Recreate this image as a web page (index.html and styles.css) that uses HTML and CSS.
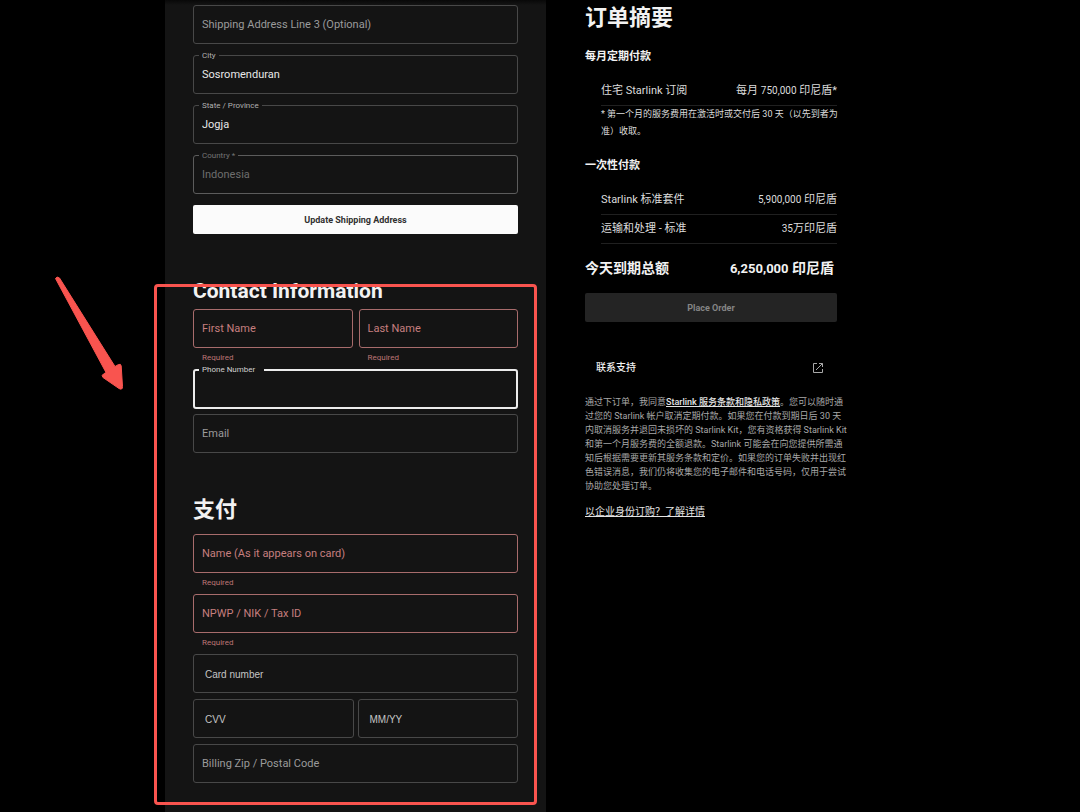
FILE: index.html
```html
<!DOCTYPE html>
<html lang="zh-CN">
<head>
<meta charset="utf-8">
<meta name="viewport" content="width=device-width, initial-scale=1">
<title>Starlink</title>
<link rel="stylesheet" href="styles.css">
</head>
<body>
<div class="page">
  <main class="panel">
    <form class="form">
      <div class="shipping">
        <div class="field"><input id="line3" type="text"><label for="line3">Shipping Address Line 3 (Optional)</label></div>
        <div class="field floating"><input id="city" type="text" value="Sosromenduran"><label for="city">City</label></div>
        <div class="field floating"><input id="state" type="text" value="Jogja"><label for="state">State / Province</label></div>
        <div class="field floating disabled"><input id="country" type="text" value="Indonesia" disabled><label for="country">Country *</label></div>
        <button class="btn btn-light" type="button">Update Shipping Address</button>
      </div>

      <div class="marked">
        <section class="group">
          <h2 class="title">Contact Information</h2>
          <div class="pair">
            <div>
              <div class="field error"><input id="first" type="text"><label for="first">First Name</label></div>
              <p class="hint">Required</p>
            </div>
            <div>
              <div class="field error"><input id="last" type="text"><label for="last">Last Name</label></div>
              <p class="hint">Required</p>
            </div>
          </div>
          <div class="field floating focused"><input id="phone" type="tel"><label for="phone">Phone Number</label></div>
          <div class="field"><input id="email" type="email"><label for="email">Email</label></div>
        </section>

        <section class="group payment">
          <h2 class="title">支付</h2>
          <div>
            <div class="field error"><input id="holder" type="text"><label for="holder">Name (As it appears on card)</label></div>
            <p class="hint">Required</p>
          </div>
          <div>
            <div class="field error"><input id="tax" type="text"><label for="tax">NPWP / NIK / Tax ID</label></div>
            <p class="hint">Required</p>
          </div>
          <div class="card-fields">
            <div class="field card"><input id="card" type="text"><label for="card">Card number</label></div>
            <div class="pair tight">
              <div class="field card"><input id="cvv" type="text"><label for="cvv">CVV</label></div>
              <div class="field card"><input id="expiry" type="text"><label for="expiry">MM/YY</label></div>
            </div>
            <div class="field"><input id="zip" type="text"><label for="zip">Billing Zip / Postal Code</label></div>
          </div>
        </section>
        <div class="frame" aria-hidden="true"></div>
        <svg class="arrow" viewBox="0 0 70 116" width="70" height="116" aria-hidden="true">
          <path d="M1.500 3.500Q3 1 5.500 3L61 91.500L64.500 89.500Q67 88.500 67.200 91L68.500 111.500Q68.500 115.500 65 113.500L49 102.500Q47 100.500 49.500 99L52 97.500Z" fill="#f9544f" stroke="#f9544f" stroke-width="1" stroke-linejoin="round"/>
        </svg>
      </div>
    </form>
  </main>

  <aside class="summary">
    <h2 class="title">订单摘要</h2>
    <h3 class="subtitle">每月定期付款</h3>
    <dl class="rows">
      <div class="row"><dt>住宅 Starlink 订阅</dt><dd>每月 <span class="num">750,000</span> 印尼盾*</dd></div>
    </dl>
    <p class="footnote"><span class="line">* 第一个月的服务费用在激活时或交付后 30 天（以先到者为</span><span class="line">准）收取。</span></p>
    <h3 class="subtitle once">一次性付款</h3>
    <dl class="rows">
      <div class="row"><dt>Starlink 标准套件</dt><dd><span class="num">5,900,000</span> 印尼盾</dd></div>
      <div class="row"><dt>运输和处理 - 标准</dt><dd><span class="num">35</span>万印尼盾</dd></div>
    </dl>
    <p class="total"><span>今天到期总额</span><span><span class="num">6,250,000</span> 印尼盾</span></p>
    <button class="btn btn-dark" type="button" disabled>Place Order</button>
    <a class="support" href="#">联系支持
      <svg width="12" height="12" viewBox="0 0 12 12" fill="none" stroke="#a8a8a8" aria-hidden="true"><path d="M5 1.500H1.500V10.500H10.500V7M7 1.500H10.500V5M10.500 1.500L4 8"/></svg>
    </a>
    <p class="legal">
      <span class="line">通过下订单，我同意<a href="#">Starlink 服务条款和隐私政策</a>。您可以随时通</span>
      <span class="line">过您的 Starlink 帐户取消定期付款。如果您在付款到期日后 30 天</span>
      <span class="line">内取消服务并退回未损坏的 Starlink Kit，您有资格获得 Starlink Kit</span>
      <span class="line">和第一个月服务费的全额退款。Starlink 可能会在向您提供所需通</span>
      <span class="line">知后根据需要更新其服务条款和定价。如果您的订单失败并出现红</span>
      <span class="line">色错误消息，我们仍将收集您的电子邮件和电话号码，仅用于尝试</span>
      <span class="line">协助您处理订单。</span>
    </p>
    <a class="business" href="#">以企业身份订购？了解详情</a>
  </aside>
</div>
</body>
</html>
```
FILE: styles.css
```css
* { box-sizing: border-box; }
body, h2, h3, p, dl, dd { margin: 0; }

body {
  background: #000;
  color: #f2f2f2;
  font-family: Roboto, "Noto Sans CJK SC", sans-serif;
  font-size: 11px;
  overflow: hidden;
}

.page {
  display: grid;
  grid-template-columns: 165fr 381fr 39fr 252fr 243fr;
  min-height: 100vh;
}

.panel {
  grid-column: 2;
  min-width: 0;
  padding: 5px 28px 29px;
  background: linear-gradient(#080808, #141414 5px);
}

.shipping { display: grid; gap: 11px; }

.title {
  font-size: 22px;
  line-height: 24px;
  font-weight: 700;
}

.field { position: relative; }

.field input {
  display: block;
  width: 100%;
  height: 39px;
  padding: 0 8px;
  border: 1px solid #484848;
  border-radius: 3px;
  outline: 0;
  background: transparent;
  color: #e8e8e8;
  font: inherit;
}

.field label {
  position: absolute;
  top: 12px;
  left: 9px;
  line-height: 16px;
  color: #9b9b9b;
  white-space: nowrap;
}

.field.floating label {
  top: -5px;
  left: 6px;
  padding: 0 3px;
  background: #141414;
  font-size: 8px;
  line-height: 12px;
  color: #b0b0b0;
}

.field.disabled input { border-color: #5c5c5c; color: #6e6e6e; }
.field.disabled label { color: #757575; }
.field.error input { border-color: #a86c6c; }
.field.error label { color: #c67f7f; }
.field.focused input { height: 40px; border: 2px solid #ececec; }
.field.focused label { padding-right: 9px; color: #d0d0d0; }

.field.card label {
  top: 13px;
  left: 12px;
  font-family: "Liberation Sans", sans-serif;
  font-size: 10px;
  color: #c4c4c4;
}

.hint {
  padding: 3px 9px 0;
  font-size: 8px;
  line-height: 13px;
  color: #bd7575;
}

.btn {
  height: 29px;
  padding: 0;
  border: 0;
  border-radius: 2px;
  font: 700 9px/12px Roboto, sans-serif;
}
.btn-light { background: #fbfbfb; color: #303030; }
.btn-dark { width: 100%; background: #242424; color: #858585; }

.marked { position: relative; margin-top: 45px; }
.group { display: grid; gap: 5px; }
.group .title { font-size: 21px; margin-bottom: 1px; }
.payment { margin-top: 45px; }
.payment .title { font-size: 22px; margin-bottom: 7px; }

.pair { display: grid; grid-template-columns: 1fr 1fr; gap: 6px; }
.pair.tight { gap: 4px; }
.card-fields { display: grid; gap: 6px; }

.frame {
  position: absolute;
  inset: 5px -19px -22px -39px;
  border: 3px solid #f9544f;
  border-radius: 4px;
  pointer-events: none;
}
.arrow { position: absolute; top: -4px; left: -139px; }

.summary {
  grid-column: 4;
  min-width: 0;
  padding-top: 6px;
}

.subtitle {
  margin-top: 19px;
  font-size: 11px;
  line-height: 16px;
  font-weight: 700;
}
.subtitle.once { margin-top: 18px; }

.rows { margin-top: 12px; padding-left: 16px; }

.row {
  display: flex;
  justify-content: space-between;
  padding: 6px 0;
  border-bottom: 1px solid #202020;
  line-height: 16px;
  color: #dcdcdc;
  white-space: nowrap;
}

.line { display: block; white-space: nowrap; }

.footnote {
  padding-left: 16px;
  font-size: 9px;
  line-height: 17px;
  color: #dcdcdc;
}

.num { font-size: 10px; }

.total {
  display: flex;
  justify-content: space-between;
  margin: 14px 3px 14px 0;
  font-size: 14px;
  line-height: 20px;
  font-weight: 700;
}
.total .num { font-size: 13px; }

.support {
  display: flex;
  justify-content: space-between;
  align-items: center;
  margin: 38px 13px 0 11px;
  font-size: 10px;
  line-height: 16px;
  font-weight: 500;
  color: #f2f2f2;
  text-decoration: none;
}

.legal {
  margin-top: 19px;
  font-size: 9px;
  line-height: 14px;
  color: #a8a8a8;
}
.legal a { color: #e4e4e4; font-weight: 500; }

.business {
  display: block;
  margin-top: 11px;
  font-size: 10px;
  line-height: 16px;
  color: #e4e4e4;
}
```
